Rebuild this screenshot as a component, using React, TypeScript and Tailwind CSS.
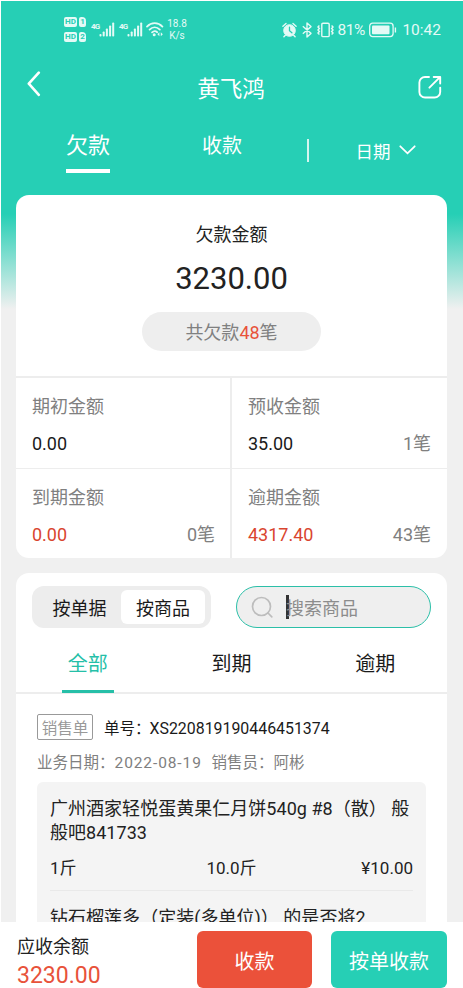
import { useState } from 'react';

interface Amount {
  label: string;
  value: string;
  count?: string;
  danger?: boolean;
}

interface Product {
  name: string;
  unit: string;
  quantity: string;
  price: string;
}

const AMOUNTS: Amount[] = [
  { label: '期初金额', value: '0.00' },
  { label: '预收金额', value: '35.00', count: '1笔' },
  { label: '到期金额', value: '0.00', count: '0笔', danger: true },
  { label: '逾期金额', value: '4317.40', count: '43笔', danger: true },
];

const PRODUCTS: Product[] = [
  {
    name: '广州酒家轻悦蛋黄果仁月饼540g #8（散） 般般吧841733',
    unit: '1斤',
    quantity: '10.0斤',
    price: '¥10.00',
  },
  {
    name: '钻石榴莲多（定装(多单位)） 的是否将2',
    unit: '1斤',
    quantity: '10.0斤',
    price: '¥10.00',
  },
];

const FILTERS = ['全部', '到期', '逾期'];

const SimBadge = ({ slot }: { slot: string }) => (
  <div className="flex h-[10px] gap-[2px] text-[8px] leading-[10px] font-bold text-[#26cfb5]">
    <span className="w-[13px] rounded-[2px] bg-[#e4faf6] text-center">HD</span>
    <span className="w-[7px] rounded-[2px] rounded-tr-[4px] bg-[#e4faf6] text-center">
      {slot}
    </span>
  </div>
);

const Signal = () => (
  <div className="flex h-[15px] w-[24px] items-start">
    <span className="w-[8px] text-[8px] leading-[9px] font-bold tracking-[-0.8px]">4G</span>
    <svg width="16" height="15" viewBox="0 0 16 15" fill="currentColor">
      <rect x="0.5" y="12" width="2" height="2.5" rx="0.8" />
      <rect x="3.7" y="9.5" width="2" height="5" rx="0.8" />
      <rect x="6.9" y="6.5" width="2" height="8" rx="0.8" />
      <rect x="10.1" y="3.5" width="2" height="11" rx="0.8" />
      <rect x="13.2" y="0.5" width="2" height="14" rx="0.8" />
    </svg>
  </div>
);

const StatusBar = () => (
  <div className="flex h-[58px] pr-[22px] pl-[63px] text-[#e4faf6]">
    <div className="flex flex-col gap-[5px] pt-[16px]">
      <SimBadge slot="1" />
      <SimBadge slot="2" />
    </div>
    <div className="flex gap-[4px] pt-[21px] pl-[5px]">
      <Signal />
      <Signal />
    </div>
    <svg className="mt-[20px] ml-[3px]" width="18" height="16" viewBox="0 0 18 16" fill="none">
      <path
        d="M1 5.6C5.4 1 12 1 16.4 5.6M3.6 8.6c3-3 7.2-3 10.2 0M6.1 11.4c1.6-1.5 3.6-1.5 5.1-.2"
        stroke="currentColor"
        strokeWidth="1.8"
        strokeLinecap="round"
      />
      <circle cx="8.2" cy="13.8" r="1.5" fill="currentColor" />
      <path d="M13.4 11.3 11.4 13.3l2 2zM14.8 11.3l2 2-2 2z" fill="currentColor" />
    </svg>
    <div className="w-[26px] pt-[17px] text-center text-[10px] leading-[12px]">
      18.8
      <br />
      K/s
    </div>
    <div className="flex flex-1 items-center justify-end">
      <svg width="15" height="16" viewBox="0 0 15 16" fill="none" stroke="currentColor">
        <circle cx="7.5" cy="8.5" r="5.8" fill="currentColor" />
        <path d="M.9 4.2 4 1.4M14.1 4.2 11 1.4M3.3 13.2l-1.4 1.6M11.7 13.2l1.4 1.6" strokeWidth="1.4" strokeLinecap="round" />
        <path d="M7.5 5.2v3.6l2.4 2" stroke="#26cfb5" strokeWidth="1.3" strokeLinecap="round" />
      </svg>
      <svg className="ml-[5px]" width="10" height="16" viewBox="0 0 10 16" fill="none" stroke="currentColor" strokeWidth="1.4" strokeLinejoin="round">
        <path d="M.8 4.3 9 11.4 5 15V1l4 3.6L.8 11.7" />
      </svg>
      <svg className="ml-[5px]" width="17" height="16" viewBox="0 0 17 16" fill="none" stroke="currentColor" strokeWidth="1.4">
        <rect x="4.8" y="1.2" width="7.4" height="13.4" rx="1.2" />
        <path d="M2.4 3.6 1 5l1.4 1.5L1 8l1.4 1.5L1 11l1.4 1.4M14.6 3.6 16 5l-1.4 1.5L16 8l-1.4 1.5L16 11l-1.4 1.4" />
      </svg>
      <span className="mt-[2px] ml-[3px] w-[29px] text-[15.5px] tracking-tight">81%</span>
      <svg className="ml-[3px]" width="28" height="16" viewBox="0 0 28 16" fill="none" stroke="currentColor">
        <rect x=".7" y="1.2" width="23.4" height="13.4" rx="3" strokeWidth="1.3" />
        <rect x="3" y="3.5" width="17.5" height="8.8" rx="1" fill="currentColor" stroke="none" />
        <path d="M26.4 5.5v5" strokeWidth="1.4" />
      </svg>
      <span className="mt-[2px] ml-[5px] text-[15.5px]">10:42</span>
    </div>
  </div>
);

const Header = () => (
  <div className="flex h-[58px] items-center justify-between pr-[21px] pl-[26px] text-white">
    <svg width="14" height="26" viewBox="0 0 14 26" fill="none" className="mb-[9px]">
      <path d="M11.8 1.6 1.8 12.7l10 11.1" stroke="currentColor" strokeWidth="2.6" strokeLinecap="round" strokeLinejoin="round" />
    </svg>
    <h1 className="ml-[3px] pt-[2px] text-[22.5px] leading-[56px]">黄飞鸿</h1>
    <svg width="24" height="24" viewBox="0 0 24 24" fill="none" className="mb-[2px]">
      <path
        d="M11 2H7a5.6 5.6 0 0 0-5.6 5.6v9.3A5.6 5.6 0 0 0 7 22.5h9.6a5.6 5.6 0 0 0 5.6-5.6V12.6M15.7 2h6.5v6.6M21.7 2.4 11.4 12.7"
        stroke="currentColor"
        strokeWidth="1.9"
        strokeLinecap="round"
        strokeLinejoin="round"
      />
    </svg>
  </div>
);

const HeaderTabs = () => (
  <div className="flex h-[78px] pt-[12px] pl-[65px] text-white">
    <button className="flex h-[44px] w-[44px] flex-col items-center justify-between border-b-4 border-white text-[22px] leading-[34px]">
      欠款
    </button>
    <button className="ml-[92px] h-[34px] text-[20px] leading-[34px]">收款</button>
    <span className="mt-[10px] ml-[65px] h-[23px] w-[1.5px] bg-white/80" />
    <button className="mt-[8px] ml-[47px] flex h-[30px] items-center text-[17.5px] leading-[30px]">
      日期
      <svg className="mb-[4px] ml-[8px]" width="17" height="10" viewBox="0 0 17 10" fill="none">
        <path d="m1.3 1.3 7.2 7 7.2-7" stroke="currentColor" strokeWidth="1.8" strokeLinecap="round" />
      </svg>
    </button>
  </div>
);

const Summary = () => (
  <section className="h-[363px] overflow-hidden rounded-[13px] bg-white">
    <div className="flex h-[181px] flex-col items-center pt-[26px] text-[#222]">
      <h2 className="text-[18px] leading-[28px]">欠款金额</h2>
      <p className="mt-[10px] text-[31px] leading-[40px]">3230.00</p>
      <p className="mt-[13px] h-[39px] w-[179px] rounded-full bg-[#eee] text-center text-[18px] leading-[42px] text-[#808080]">
        共欠款<span className="text-[#e8523a]">48</span>笔
      </p>
    </div>
    <div className="grid grid-cols-[214px_1fr] gap-x-[2px] border-t-2 border-[#ededed] bg-[#ededed]">
      {AMOUNTS.map((item) => (
        <div
          key={item.label}
          className="mb-px h-[90px] bg-white pt-[15px] pr-[15px] pl-[16px] leading-[28px] even:pr-[16px]"
        >
          <p className="text-[18px] text-[#808080]">{item.label}</p>
          <div className="mt-[9px] flex justify-between text-[18px]">
            <span className={item.danger ? 'text-[#d9452f]' : 'text-[#1a1a1a]'}>
              {item.value}
            </span>
            <span className="text-[#808080]">{item.count}</span>
          </div>
        </div>
      ))}
    </div>
  </section>
);

const Toolbar = () => (
  <div className="flex h-[55px] justify-between px-[16px] pt-[13px]">
    <div className="flex h-[42px] w-[179px] items-center rounded-[12px] bg-[#ededed] text-[18px] text-[#1a1a1a]">
      <button className="h-[34px] w-[89px] pl-[6px] leading-[37px]">按单据</button>
      <button className="h-[34px] w-[84px] rounded-[6px] bg-white leading-[37px]">按商品</button>
    </div>
    <div className="flex h-[42px] w-[195px] items-center rounded-full border-[1.5px] border-[#2cbfa8] bg-[#efefef] pl-[14px]">
      <svg width="22" height="22" viewBox="0 0 22 22" fill="none" stroke="#bdbdbd" strokeWidth="1.7">
        <circle cx="10.5" cy="10.5" r="9" />
        <path d="m17 17 3.8 3.8" strokeLinecap="round" />
      </svg>
      <span className="ml-[13px] h-[24px] w-[3px] bg-[#333]" />
      <span className="-ml-[3px] pt-[4px] text-[18px] leading-[38px] text-[#8c8c8c]">搜索商品</span>
    </div>
  </div>
);

const OrderList = () => {
  const [filter, setFilter] = useState('全部');

  return (
    <section className="mt-[15px] h-[349px] overflow-hidden rounded-t-[13px] bg-white">
      <Toolbar />
      <div className="grid h-[66px] grid-cols-3 border-b-2 border-[#ededed] text-[20px] text-[#1a1a1a]">
        {FILTERS.map((name) => (
          <button
            key={name}
            onClick={() => setFilter(name)}
            className={
              name === filter
                ? 'h-[65px] w-[52px] justify-self-center border-b-[3px] border-[#26bfa8] pt-[9px] text-[#26bfa8]'
                : 'h-[65px] w-[52px] justify-self-center border-b-[3px] border-transparent pt-[9px]'
            }
          >
            {name}
          </button>
        ))}
      </div>
      <div className="px-[21px] pt-[18px]">
        <div className="flex h-[30px] items-center">
          <span className="h-[26px] w-[56px] rounded-[2px] border border-[#999] text-center text-[15.5px] leading-[28px] text-[#999]">
            销售单
          </span>
          <span className="ml-[11px] pt-[3px] text-[15.5px] leading-[30px] text-[#1a1a1a]">单号：</span>
          <span className="-ml-px pt-[3px] text-[15.9px] leading-[30px] text-[#1a1a1a]">XS220819190446451374</span>
        </div>
        <div className="mt-[7px] flex text-[15.5px] leading-[28px] text-[#808080]">
          <span>业务日期：</span>
          <span className="w-[97px] tracking-[0.9px]">2022-08-19</span>
          <span>销售员：阿彬</span>
        </div>
        <ul className="mt-[5px] rounded-[6px] bg-[#f4f4f4] px-[13px]">
          {PRODUCTS.map((product) => (
            <li
              key={product.name}
              className="border-b border-[#e9e9e9] pt-[15px] text-[18px] text-[#222]"
            >
              <p className="leading-[24px] tracking-[0.03px]">{product.name}</p>
              <div className="mt-[10px] grid h-[35px] grid-cols-3 text-[17px] leading-[26px]">
                <span>{product.unit}</span>
                <span className="text-center">{product.quantity}</span>
                <span className="text-right">{product.price}</span>
              </div>
            </li>
          ))}
        </ul>
      </div>
    </section>
  );
};

const Footer = () => (
  <footer className="flex h-[66px] bg-white pl-[16px]">
    <div className="w-[180px] pt-[11px]">
      <p className="text-[18px] leading-[28px] text-[#222]">应收余额</p>
      <p className="text-[23px] leading-[30px] text-[#e8523a]">3230.00</p>
    </div>
    <button className="mt-[9px] h-[57px] w-[115px] rounded-[6px] bg-[#eb513a] pt-[5px] text-[20px] text-white">
      收款
    </button>
    <button className="mt-[9px] ml-[19px] h-[57px] w-[116px] rounded-[6px] bg-[#26cfb5] pt-[5px] text-[20px] text-white">
      按单收款
    </button>
  </footer>
);

const App = () => {
  return (
    <div className="h-[988px] w-[463px] overflow-hidden border-t border-l border-white bg-white font-[Roboto,'Noto_Sans_CJK_SC',sans-serif]">
      <div className="h-[921px] overflow-hidden bg-[#f0f0f0] bg-[linear-gradient(180deg,#26cfb5_0px,#26cfb5_213px,#f0f0f0_308px)]">
        <StatusBar />
        <Header />
        <HeaderTabs />
        <main className="ml-[15px] w-[431px]">
          <Summary />
          <OrderList />
        </main>
      </div>
      <Footer />
    </div>
  );
};

export default App;
